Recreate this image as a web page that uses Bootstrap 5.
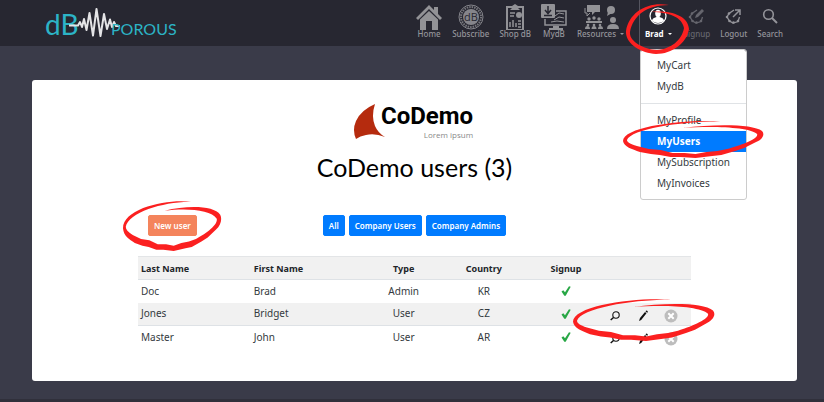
<!DOCTYPE html>
<html lang="en">
<head>
<meta charset="utf-8">
<meta name="viewport" content="width=device-width, initial-scale=1">
<title>dB Porous - CoDemo users</title>
<link href="https://cdn.jsdelivr.net/npm/bootstrap@5.3.0/dist/css/bootstrap.min.css" rel="stylesheet">
<style>
body{background:#3a3b49;font-family:"Noto Sans","Open Sans",sans-serif;font-size:10px;line-height:15px;color:#343a40}
.topbar{background:#272731;height:46px;padding:0 41px 0 45px}
.brand-logo{width:140px;height:32px}
.mainnav{gap:10px}
.mainnav .navitem{color:#94949a;font-size:8px;line-height:10px;font-weight:500;text-decoration:none;display:flex;flex-direction:column;align-items:center;justify-content:flex-end;height:39px;white-space:nowrap}
.navitem svg{height:26px;width:26px;margin-bottom:-1px}
.navitem .icon-s{height:18px;width:18px;margin-bottom:4px}
.navitem .icon-w{width:38px}
.account{border-left:1px solid #55555f;height:46px;margin-left:5px;padding:0 2px 0 5px}
.mainnav .account .navitem{color:#fff;font-weight:700;height:39px}
.caret::after{content:"";display:inline-block;border:2px solid transparent;border-top-color:currentColor;border-bottom:0;margin-left:4px;vertical-align:2px}
.mainnav .dim{color:#66666e}
.account .dropdown-menu{top:49px;left:0;min-width:107px;padding:5px 0;border:1px solid #ccc;border-radius:3px;font-size:10px;z-index:10}
.account .dropdown-item{padding:0 16px;line-height:21px;color:#343a40}
.account .dropdown-item.active{background:#007bff;color:#fff;font-weight:700}
.account .dropdown-divider{margin:6px 0;border-color:#e0e3e6}
.ring{position:absolute;pointer-events:none;z-index:20;fill:#fb2020}
.ring-account{left:-14px;top:3px;width:64px;height:52px}
.ring-item{left:-18px;top:-11px;width:143px;height:38px}
.ring-new{left:-25px;top:-15px;width:100px;height:51px}
.ring-row{left:-35px;top:-9px;width:144px;height:43px}
main{padding:34px 27px 18px 32px}
.panel{border:0;border-radius:3px;background:#fff;padding:22px 106px 32px}
.logo-mark{width:34px;height:38px}
.logo-block{margin-left:-5px}
.logo-name{font:700 24px/28px Roboto,sans-serif;color:#000}
.logo-tag{font:8px/10px "Open Sans",sans-serif;color:#888}
h1{font:25px/30px Lato,sans-serif;color:#000;margin:12px 0 33px}
.tools{display:grid;grid-template-columns:1fr auto 1fr;margin-bottom:20px}
.tools-start{padding-left:10px}
.panel .btn{font:600 8px/19px "Noto Sans",sans-serif;padding:0 5px;border-radius:2px;border:1px solid #007bff;background:#007bff;color:#fff}
.panel .btn-new{background:#f4845c;border-color:#f4845c}
.users{table-layout:fixed;color:#343a40;margin:0}
.users th,.users td{padding:0 3px;height:23px;vertical-align:middle;border:0;box-shadow:none}
.users thead th{background:#f1f1f1;border-top:1px solid #e3e5e7;border-bottom:1px solid #dee2e6;color:#212529;font-size:9px}
.users .alt td{background:#f1f1f1;border-bottom:1px solid #dee2e6}
.w-name{width:20.4%}.w-mid{width:14.5%}.w-sign{width:15.2%}
.users .act-cell{padding-left:0}
.acts{gap:14px}
.act{border:0;background:none;padding:0;width:14px;height:14px;display:flex}
.act svg{width:14px;height:14px;margin-top:2px}
.tick{width:10px;height:10px;display:inline-block;vertical-align:middle;margin-bottom:2px}
footer{height:4px;background:#30303b}
</style>
<script src="https://cdn.jsdelivr.net/npm/bootstrap@5.3.0/dist/js/bootstrap.bundle.min.js"></script>
</head>
<body>
<svg class="d-none" aria-hidden="true">
<symbol id="ring" viewBox="0 0 144 38" preserveAspectRatio="none"><path d="M98 1.5C66-1 0 6 0 21C1 27 9 29 17 32L28 34L37 35L48 37L58 37L73 38L90 36L99 35L113 31L122 28L134 22C141 19 143 14 140 11C131 4 92 4 60 8C90 6 127 7 135 14C137 19 116 26 105 29L95 31L84 32L73 34L62 33L50 33L38 30L26 29L14 26C7 24 4 22 4 20C8 9 60 1 98 1.5Z"/></symbol>
<symbol id="ring-round" viewBox="0 0 64 52" preserveAspectRatio="none"><path d="M43 2C22-2 3 9 0 28C-1 40 14 50 30 51C46 51 61 40 63 26C62 12 43 7 25 9C43 9 56 14 58 25C56 37 45 46 31 47C17 46 3 38 4 29C7 13 20 2 43 2Z"/></symbol>
<symbol id="tick" viewBox="0 0 10 10"><path d="M.5 5.500L2.300 4.300L4 6.300L8 .3L9.700 .8L4.700 9.700H3.300Z" fill="#28a745"/></symbol>
<symbol id="glass" viewBox="0 0 14 14"><g fill="none" stroke="#111"><circle cx="8" cy="6" r="3.2" stroke-width="1.1"/><path d="M5.5 8.500L2.700 11" stroke-width="1.500"/></g></symbol>
<symbol id="pen" viewBox="0 0 14 14"><path d="M3 12L4 9L9 3L10.500 4.200L5.200 11Z M9.500 2.300L10.300 1.400Q12.200 1.400 11.800 3.200L11 3.800Z" fill="#111"/></symbol>
<symbol id="del" viewBox="0 0 14 14"><circle cx="7" cy="7" r="6.500" fill="#bdbdbd"/><path d="M4.300 4.300L9.700 9.700M9.700 4.300L4.300 9.700" stroke="#fff" stroke-width="2"/></symbol>
<symbol id="share" viewBox="0 0 18 18"><path d="M9 3L4 6.500L2 10L4.500 14L8 16L13 14.500L14.500 10" fill="none" stroke="currentColor" stroke-width="1.300"/><g fill="currentColor"><circle cx="4" cy="6.500" r="1.300"/><circle cx="2" cy="10" r="1.300"/><circle cx="4.500" cy="14" r="1.300"/><circle cx="8.500" cy="15.500" r="1.300"/><circle cx="13" cy="14" r="1.300"/></g></symbol>
</svg>

<nav class="topbar d-flex justify-content-between align-items-start" aria-label="Main">
  <a href="#" class="d-block mt-2" aria-label="dB Porous">
    <svg class="brand-logo d-block" viewBox="0 0 140 32">
      <text x="0" y="27" font-family="Lato,sans-serif" font-size="28" fill="#2cb4c6">dB</text>
      <path d="M24 17.500H33L35 14L37 19L39 11L41.500 22L44.500 5L48 27.500L51.500 1L55.500 28L59 6L62 21L65 11.500L67 19L69 14L71 18H75" fill="none" stroke="#e4e4e6" stroke-width="2" stroke-linejoin="round"/>
      <text x="66" y="27" font-family="Lato,sans-serif" font-size="16" fill="#2cb4c6">POROUS</text>
    </svg>
  </a>
  <div class="mainnav d-flex">
    <a href="#" class="navitem"><svg viewBox="0 0 26 26"><path d="M0 14L13 1L18 6V3H22V10L26 14L24 16L13 5L2 16Z M4 15.500L13 7L22 15.500V26H16V17H10V26H4Z" fill="#929296"/></svg>Home</a>
    <a href="#" class="navitem"><svg viewBox="0 0 26 26"><circle cx="13" cy="13" r="12" fill="none" stroke="#85858b" stroke-width="1"/><circle cx="13" cy="13" r="10" fill="none" stroke="#77777d" stroke-width="2" stroke-dasharray="1.500 1"/><circle cx="13" cy="13" r="8" fill="#85858b"/><text x="13" y="17" text-anchor="middle" font-family="Open Sans,sans-serif" font-size="11" fill="#272731">dB</text></svg>Subscribe</a>
    <a href="#" class="navitem"><svg viewBox="0 0 26 26"><path d="M5 3H21V26H5Z" fill="none" stroke="#929296" stroke-width="2"/><path d="M10 4V2L13 0L16 2V4L18 6H8Z" fill="#929296"/><path d="M8 9H13M8 12H12M8 23V18M11 23V16M14 23V19M16 17H19M16 20H19M16 23H19" stroke="#929296" stroke-width="1.500"/><circle cx="17" cy="11" r="3" fill="#929296"/></svg>Shop dB</a>
    <a href="#" class="navitem"><svg viewBox="0 0 26 26"><path d="M15 7H25V21H4V15" fill="none" stroke="#929296" stroke-width="1.500"/><path d="M12 22H18V24H22V26H8V24H12Z" fill="#929296"/><path d="M14 12L18 9L23 10M13 16L18 13L23 14M10 18L16 17L23 18" stroke="#929296" fill="none"/><rect width="14" height="14" rx="1" fill="#929296"/><path d="M7 2V9M4 6L7 9.500L10 6M3 11.500H11" fill="none" stroke="#272731" stroke-width="1.500"/></svg>MydB</a>
    <a href="#" class="navitem"><svg class="icon-w" viewBox="0 0 38 26"><g fill="#929296"><path d="M5 1H18V8H13L10 11V8H5Z"/><path d="M3 4V9H5V12L8 9" fill="none" stroke="#929296"/><circle cx="29" cy="6" r="4"/><path d="M26 8L25 12L30 9Z"/><circle cx="7" cy="15" r="1.700"/><circle cx="12" cy="14" r="1.700"/><circle cx="17" cy="15" r="1.700"/><path d="M4 17H20V19H4ZM3 25Q3 22 5.500 22T8 25ZM9.500 25Q9.500 22 12 22T14.500 25ZM16 25Q16 22 18.500 22T21 25Z"/><circle cx="6" cy="21" r="1.300"/><circle cx="12" cy="21" r="1.300"/><circle cx="18" cy="21" r="1.300"/><circle cx="31" cy="16" r="3"/><path d="M25 25Q25 20 31 20T37 25Z"/></g></svg><span class="caret">Resources</span></a>
    <div class="account position-relative">
      <a href="#" class="navitem" aria-expanded="true"><svg class="icon-s" viewBox="0 0 18 18"><circle cx="9" cy="9" r="8" fill="none" stroke="#fff" stroke-width="1.200"/><ellipse cx="9" cy="6.500" rx="2.800" ry="3.700" fill="#fff"/><path d="M3 14Q3 11 7.500 10H10.500Q15 11 15 14Q9 18 3 14Z" fill="#fff"/></svg><span class="caret">Brad</span></a>
      <div class="dropdown-menu show">
        <a class="dropdown-item" href="#">MyCart</a>
        <a class="dropdown-item" href="#">MydB</a>
        <hr class="dropdown-divider">
        <a class="dropdown-item" href="#">MyProfile</a>
        <div class="position-relative"><a class="dropdown-item active" href="#">MyUsers</a><svg class="ring ring-item"><use href="#ring"/></svg></div>
        <a class="dropdown-item" href="#">MySubscription</a>
        <a class="dropdown-item" href="#">MyInvoices</a>
      </div>
      <svg class="ring ring-account"><use href="#ring-round"/></svg>
    </div>
    <a href="#" class="navitem dim"><svg class="icon-s" viewBox="0 0 18 18"><use href="#share"/><path d="M7 11L8 8L14 2L16 4L10 10Z" fill="currentColor"/></svg>Signup</a>
    <a href="#" class="navitem"><svg class="icon-s" viewBox="0 0 18 18"><use href="#share"/><path d="M8 10L15 3M10 3H15V8" fill="none" stroke="currentColor" stroke-width="1.500"/></svg>Logout</a>
    <a href="#" class="navitem"><svg class="icon-s" viewBox="0 0 18 18"><circle cx="7.500" cy="7.500" r="4.800" fill="none" stroke="currentColor" stroke-width="1.600"/><path d="M11 11L16 16" stroke="currentColor" stroke-width="2"/></svg>Search</a>
  </div>
</nav>

<main>
  <div class="card panel">
    <div class="d-flex justify-content-center pe-1">
      <svg class="logo-mark" viewBox="0 0 34 38"><path d="M23 2Q19 14 23 24Q26 31 33 35Q23 31 14 33Q8 34 4 37Q0 28 4 19Q9 8 23 2Z" fill="#b52b0e"/></svg>
      <div class="logo-block"><div class="logo-name">CoDemo</div><div class="logo-tag text-end">Lorem ipsum</div></div>
    </div>
    <h1 class="text-center">CoDemo users (3)</h1>
    <div class="tools">
      <div class="tools-start"><span class="position-relative d-inline-block"><button type="button" class="btn btn-new">New user</button><svg class="ring ring-new"><use href="#ring"/></svg></span></div>
      <div class="d-flex gap-1 align-self-start"><button type="button" class="btn">All</button><button type="button" class="btn">Company Users</button><button type="button" class="btn">Company Admins</button></div>
    </div>
    <table class="table users">
      <thead><tr><th class="w-name">Last Name</th><th class="w-name">First Name</th><th class="w-mid text-center">Type</th><th class="w-mid text-center">Country</th><th class="w-sign text-center">Signup</th><th aria-label="Actions"></th></tr></thead>
      <tbody>
        <tr><td>Doc</td><td>Brad</td><td class="text-center">Admin</td><td class="text-center">KR</td><td class="text-center"><svg class="tick"><use href="#tick"/></svg></td><td></td></tr>
        <tr class="alt"><td>Jones</td><td>Bridget</td><td class="text-center">User</td><td class="text-center">CZ</td><td class="text-center"><svg class="tick"><use href="#tick"/></svg></td>
          <td class="act-cell"><div class="acts d-flex position-relative"><button class="act" type="button" aria-label="View"><svg><use href="#glass"/></svg></button><button class="act" type="button" aria-label="Edit"><svg><use href="#pen"/></svg></button><button class="act" type="button" aria-label="Delete"><svg><use href="#del"/></svg></button><svg class="ring ring-row"><use href="#ring"/></svg></div></td></tr>
        <tr><td>Master</td><td>John</td><td class="text-center">User</td><td class="text-center">AR</td><td class="text-center"><svg class="tick"><use href="#tick"/></svg></td>
          <td class="act-cell"><div class="acts d-flex"><button class="act" type="button" aria-label="View"><svg><use href="#glass"/></svg></button><button class="act" type="button" aria-label="Edit"><svg><use href="#pen"/></svg></button><button class="act" type="button" aria-label="Delete"><svg><use href="#del"/></svg></button></div></td></tr>
      </tbody>
    </table>
  </div>
</main>
<footer></footer>
</body>
</html>
